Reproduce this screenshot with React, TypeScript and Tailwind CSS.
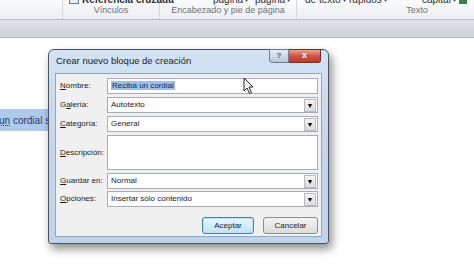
import React from 'react';

const ui = { fontFamily: '"Liberation Sans", Arial, sans-serif' };

const Arrow = () => (
  <span className="ml-[2px] text-[6px] leading-none">▾</span>
);

const RibbonTop = ({ children, className = '' }: { children: React.ReactNode; className?: string }) => (
  <span className={'absolute -top-[8px] flex items-center whitespace-nowrap text-[10px] font-bold text-[#2a2f36] ' + className}>
    {children}
  </span>
);

const Field = ({ label, value, combo = true, selected = false }: { label: React.ReactNode; value?: string; combo?: boolean; selected?: boolean }) => (
  <div className="flex h-[16px] items-center">
    <div className="w-[50px] pl-[3px] text-[8px] text-[#1b1b1b]">{label}</div>
    <div className="flex h-full flex-1 items-center border border-[#a5acb5] bg-white pl-[3px]">
      <span className="flex-1 text-[8px] text-[#1b1b1b]">
        {selected ? <span className="bg-[#9dc0ea] px-[1px] text-[#0f2a5c]">{value}</span> : value}
      </span>
      {combo && (
        <div className="mr-[1px] flex h-[13px] w-[12px] items-center justify-center border border-[#b8bcc2] bg-gradient-to-b from-[#f4f4f4] to-[#dcdcdc] text-[7px] leading-none text-black">
          ▼
        </div>
      )}
    </div>
  </div>
);

export default function App() {
  return (
    <div className="relative h-[266px] w-[474px] overflow-hidden bg-white" style={ui}>
      {/* ribbon */}
      <div className="relative flex h-[20px] border-b border-[#b7bcc4] bg-gradient-to-b from-[#fafbfc] to-[#eceef1]">
        <div className="relative w-[63px] border-r border-[#d3d7dc]">
          <RibbonTop className="left-[42px]"><Arrow /></RibbonTop>
        </div>
        <div className="relative w-[97px] border-r border-[#d3d7dc]">
          <RibbonTop className="left-[6px]">
            <span className="mr-[3px] inline-block h-[9px] w-[10px] border border-[#6a7a8c] bg-[#e8eef6]" />
            Referencia cruzada
          </RibbonTop>
          <div className="absolute bottom-[2px] w-full text-center text-[9px] text-[#6b737c]">Vínculos</div>
        </div>
        <div className="relative w-[137px] border-r border-[#d3d7dc]">
          <RibbonTop className="left-[26px] font-normal"><Arrow /></RibbonTop>
          <RibbonTop className="left-[53px] font-normal">página<Arrow /></RibbonTop>
          <RibbonTop className="left-[95px] font-normal">página<Arrow /></RibbonTop>
          <div className="absolute bottom-[2px] w-full text-center text-[9px] text-[#6b737c]">Encabezado y pie de página</div>
        </div>
        <div className="relative flex-1">
          <RibbonTop className="left-[8px] font-normal">de texto<Arrow /></RibbonTop>
          <RibbonTop className="left-[52px] font-normal">rápidos<Arrow /></RibbonTop>
          <RibbonTop className="left-[106px] font-normal"><Arrow /></RibbonTop>
          <RibbonTop className="left-[125px] font-normal">capital<Arrow /></RibbonTop>
          <span className="absolute -top-[2px] left-[162px] h-[6px] w-[8px] bg-[#3f7d4a]" />
          <div className="absolute bottom-[2px] left-[95px] w-[50px] text-center text-[9px] text-[#6b737c]">Texto</div>
        </div>
      </div>
      {/* gray band */}
      <div className="h-[18px] border-b border-[#b3b8bf] bg-gradient-to-b from-[#dfe2e6] to-[#cfd3d8]" />

      {/* document */}
      <div className="pt-[71px]">
        <div className="flex h-[22px] w-[48px] items-center bg-[#adc9ec]">
          <span className="-ml-[1px] whitespace-nowrap text-[10px] text-[#1e3a78]">
            <span className="underline decoration-dotted decoration-[#1e3a78]">un</span> cordial s
          </span>
        </div>
      </div>

      {/* dialog */}
      <div className="absolute left-[48px] top-[49px] flex h-[195px] w-[281px] flex-col rounded-t-[6px] rounded-b-[3px] border border-[#4a5360] bg-gradient-to-b from-[#d3e2f4] via-[#c3d6ee] to-[#bfd3ec] px-[6px] pb-[6px] shadow-[3px_5px_10px_rgba(0,0,0,0.45)]">
        <div className="relative flex h-[23px] items-center">
          <span className="pl-[1px] text-[9.5px] text-[#1c1c1c]">Crear nuevo bloque de creación</span>
          <div className="absolute -top-[1px] right-[1px] flex">
            <div className="flex h-[14px] w-[20px] items-center justify-center rounded-bl-[3px] border border-[#6d7d91] bg-gradient-to-b from-[#e4ecf5] to-[#b8c7d9] text-[8px] font-bold text-[#4c5a6b]">
              ?
            </div>
            <div className="flex h-[14px] w-[32px] items-center justify-center rounded-br-[3px] border border-l-0 border-[#7a2b22] bg-gradient-to-b from-[#e7a497] via-[#cc5443] to-[#b83a2a] text-[9px] font-bold text-white">
              x
            </div>
          </div>
        </div>
        <div className="flex flex-1 flex-col gap-[3px] border border-[#8fa6c4] bg-[#f0f0f0] pl-[1px] pr-[3px] pt-[4px]">
          <Field label={<><u>N</u>ombre:</>} value="Reciba un cordial" combo={false} selected />
          <Field label={<>G<u>a</u>lería:</>} value="Autotexto" />
          <Field label={<><u>C</u>ategoría:</>} value="General" />
          <div className="flex h-[35px] items-center">
            <div className="w-[50px] pl-[3px] text-[8px] text-[#1b1b1b]"><u>D</u>escripción:</div>
            <div className="h-full flex-1 border border-[#a5acb5] bg-white" />
          </div>
          <Field label={<><u>G</u>uardar en:</>} value="Normal" />
          <div className="-mt-[1px]">
            <Field label={<><u>O</u>pciones:</>} value="Insertar sólo contenido" />
          </div>
          <div className="mt-[7px] flex justify-end gap-[9px]">
            <button className="h-[17px] w-[52px] rounded-[3px] border border-[#3c7fb1] bg-gradient-to-b from-[#eaf6fd] to-[#bfe2f7] text-[8px] text-[#1b1b1b] shadow-[inset_0_0_0_1px_#b9e4fb]">
              Aceptar
            </button>
            <button className="h-[17px] w-[55px] rounded-[3px] border border-[#8d8d8d] bg-gradient-to-b from-[#f4f4f4] to-[#dcdcdc] text-[8px] text-[#1b1b1b]">
              Cancelar
            </button>
          </div>
        </div>
      </div>

      {/* mouse pointer */}
      <svg className="absolute left-[243px] top-[77px]" width="12" height="18" viewBox="0 0 12 18">
        <path d="M1 1 L1 14 L4 11 L6.5 16.5 L8.5 15.5 L6 10 L10 10 Z" fill="white" stroke="#222" strokeWidth="1" strokeLinejoin="round" />
      </svg>
    </div>
  );
}
